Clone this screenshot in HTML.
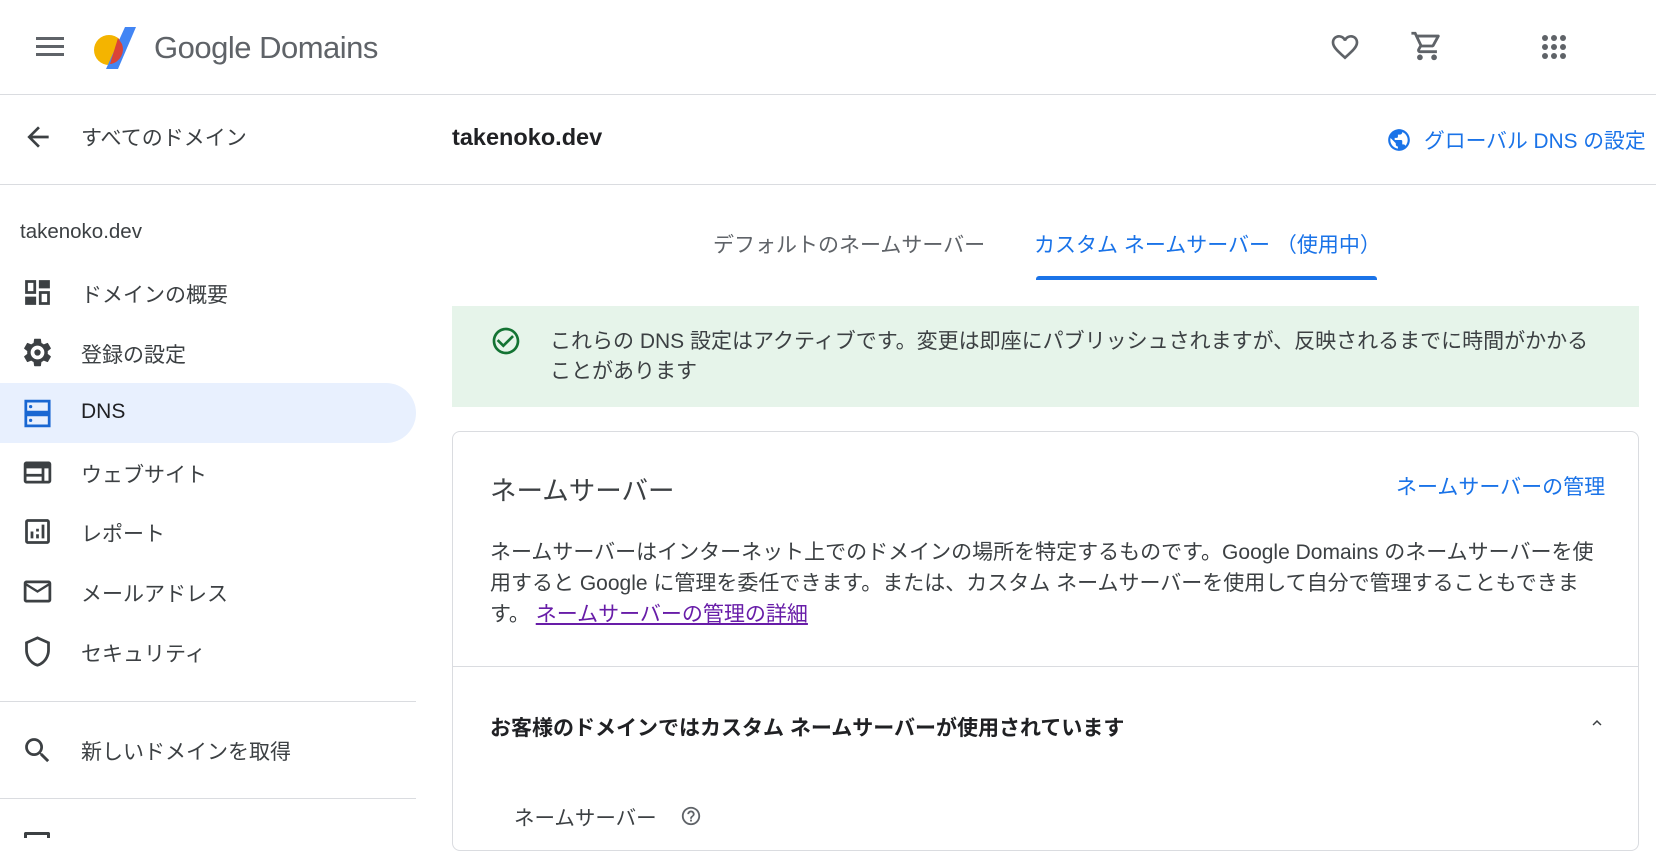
<!DOCTYPE html>
<html><head><meta charset="utf-8"><style>
*{margin:0;padding:0;box-sizing:border-box}
body{width:1656px;height:836px;overflow:hidden;background:#fff;font-family:"Liberation Sans","Noto Sans CJK JP",sans-serif;color:#3c4043;position:relative}
.a{position:absolute;white-space:nowrap}
.hl{position:absolute;height:1px;background:#dadce0}
.side{font-size:21px;color:#3c4043}
.ic{position:absolute;left:21px}
</style></head><body>
<svg class="a" style="left:36px;top:36px" width="28" height="20"><g fill="#5f6368"><rect x="0" y="1" width="28" height="3"/><rect x="0" y="9" width="28" height="3"/><rect x="0" y="17" width="28" height="3"/></g></svg>
<svg class="a" style="left:92px;top:26px" width="48" height="46" viewBox="0 0 48 46"><circle cx="17" cy="24" r="15" fill="#f4b400"/><path d="M33 1h11L26 43H14z" fill="#4285f4"/><path d="M26 12 L30 18 A15 15 0 0 1 19 38 L18 38 Z" fill="#db4437"/></svg>
<div class="a" style="left:154px;top:30px;font-size:31px;color:#5f6368;letter-spacing:-0.5px">Google Domains</div>
<svg class="a" style="left:1328px;top:31px" width="34" height="32" viewBox="0 0 24 24"><path d="M16.5 3c-1.740 0-3.41.81-4.5 2.09C10.91 3.81 9.24 3 7.5 3 4.420 3 2 5.42 2 8.5c0 3.780 3.4 6.860 8.550 11.540L12 21.350l1.450-1.320C18.6 15.360 22 12.280 22 8.5 22 5.420 19.580 3 16.5 3zm-4.4 15.550l-.1.1-.1-.1C7.140 14.240 4 11.390 4 8.5 4 6.5 5.5 5 7.5 5c1.540 0 3.040.99 3.570 2.360h1.870C13.460 5.990 14.960 5 16.5 5c2 0 3.5 1.5 3.5 3.5 0 2.890-3.140 5.740-7.900 10.050z" fill="#5f6368"/></svg>
<svg class="a" style="left:1410px;top:29px" width="34" height="34" viewBox="0 0 24 24"><path d="M15.55 13c.75 0 1.41-.41 1.75-1.03l3.58-6.49A.996.996 0 0020.01 4H5.21l-.94-2H1v2h2l3.6 7.59-1.35 2.44C4.52 15.37 5.48 17 7 17h12v-2H7l1.1-2h7.45zM6.16 6h12.15l-2.76 5H8.53L6.16 6zM7 18c-1.1 0-1.99.9-1.990 2S5.9 22 7 22s2-.9 2-2-.9-2-2-2zm10 0c-1.1 0-1.99.9-1.99 2s.89 2 1.99 2 2-.9 2-2-.9-2-2-2z" fill="#5f6368"/></svg>
<svg class="a" style="left:1541px;top:34px" width="26" height="26"><g fill="#5f6368"><circle cx="4" cy="4" r="3"/><circle cx="13" cy="4" r="3"/><circle cx="22" cy="4" r="3"/><circle cx="4" cy="13" r="3"/><circle cx="13" cy="13" r="3"/><circle cx="22" cy="13" r="3"/><circle cx="4" cy="22" r="3"/><circle cx="13" cy="22" r="3"/><circle cx="22" cy="22" r="3"/></g></svg>
<div class="hl" style="left:0;top:94px;width:1656px"></div>
<svg class="a" style="left:22px;top:121px" width="32" height="32" viewBox="0 0 24 24"><path d="M20 11H7.83l5.59-5.59L12 4l-8 8 8 8 1.41-1.41L7.83 13H20v-2z" fill="#3c4043"/></svg>
<div class="a side" style="left:81px;top:122px">すべてのドメイン</div>
<div class="a" style="left:452px;top:124px;font-size:23.5px;font-weight:bold;color:#202124">takenoko.dev</div>
<svg class="a" style="left:1386px;top:127px" width="26" height="26" viewBox="0 0 24 24"><path d="M12 2C6.48 2 2 6.48 2 12s4.48 10 10 10 10-4.48 10-10S17.52 2 12 2zm-1 17.93c-3.95-.49-7-3.85-7-7.93 0-.62.08-1.21.21-1.79L9 15v1c0 1.1.9 2 2 2v1.93zm6.9-2.54c-.26-.81-1-1.39-1.9-1.39h-1v-3c0-.55-.45-1-1-1H8v-2h2c.55 0 1-.45 1-1V7h2c1.1 0 2-.9 2-2v-.41c2.93 1.19 5 4.06 5 7.41 0 2.08-.8 3.97-2.1 5.39z" fill="#1a73e8"/></svg>
<div class="a" style="left:1424px;top:124px;font-size:20.8px;color:#1a73e8">グローバル DNS の設定</div>
<div class="hl" style="left:0;top:184px;width:1656px"></div>
<div class="a" style="left:20px;top:220px;font-size:20.5px;color:#3c4043">takenoko.dev</div>
<svg class="ic a" style="top:276px" width="33" height="33" viewBox="0 0 24 24"><path d="M3 13h8V3H3v10zm0 8h8v-6H3v6zm10 0h8V11h-8v10zm0-18v6h8V3h-8z" fill="#3c4043"/><rect x="5" y="5" width="4" height="6" fill="#fff"/><rect x="15" y="13" width="4" height="6" fill="#fff"/></svg>
<div class="a side" style="left:81px;top:279px">ドメインの概要</div>
<svg class="ic a" style="top:336px" width="33" height="33" viewBox="0 0 24 24"><path d="M19.43 12.98c.04-.32.07-.64.07-.98s-.03-.66-.07-.98l2.11-1.65c.19-.15.24-.42.12-.64l-2-3.46a.5.5 0 00-.61-.22l-2.49 1c-.52-.4-1.08-.73-1.69-.98l-.38-2.65A.488.488 0 0014 2h-4c-.25 0-.46.18-.49.42l-.38 2.650c-.61.25-1.17.59-1.69.98l-2.49-1a.5.5 0 00-.61.22l-2 3.46c-.13.22-.07.49.12.64l2.11 1.65c-.04.32-.07.65-.07.98s.03.66.07.98l-2.11 1.65c-.19.15-.24.42-.12.64l2 3.46c.12.22.39.3.61.22l2.49-1c.52.4 1.08.73 1.69.98l.38 2.65c.03.24.24.42.49.42h4c.25 0 .46-.18.49-.42l.38-2.65c.61-.25 1.17-.59 1.69-.98l2.49 1c.23.09.49 0 .61-.22l2-3.46c.12-.22.07-.49-.12-.64l-2.11-1.65zM12 17a5 5 0 110-10 5 5 0 010 10z" fill="#3c4043"/><circle cx="12" cy="12" r="2.3" fill="#3c4043"/></svg>
<div class="a side" style="left:81px;top:339px">登録の設定</div>
<div class="a" style="left:0;top:383px;width:416px;height:60px;background:#e8f0fe;border-radius:0 30px 30px 0"></div>
<svg class="ic a" style="top:397px" width="33" height="33" viewBox="0 0 24 24"><g fill="none" stroke="#1967d2" stroke-width="2"><rect x="3.5" y="3" width="17" height="8"/><rect x="3.5" y="13" width="17" height="8"/></g><circle cx="7" cy="7" r="1.2" fill="#1967d2"/><circle cx="7" cy="17" r="1.2" fill="#1967d2"/></svg>
<div class="a" style="left:81px;top:400px;font-size:21px;color:#202124">DNS</div>
<svg class="ic a" style="top:456px" width="33" height="33" viewBox="0 0 24 24"><path d="M20 4H4c-1.1 0-2 .9-2 2v12c0 1.1.9 2 2 2h16c1.1 0 2-.9 2-2V6c0-1.1-.9-2-2-2zM4 9h11v4H4V9zm0 9v-3h11v3H4zm16 0h-3V9h3v9z" fill="#3c4043"/></svg>
<div class="a side" style="left:81px;top:459px">ウェブサイト</div>
<svg class="ic a" style="top:515px" width="33" height="33" viewBox="0 0 24 24"><path d="M19 3H5c-1.1 0-2 .9-2 2v14c0 1.1.9 2 2 2h14c1.1 0 2-.9 2-2V5c0-1.1-.9-2-2-2zm0 16H5V5h14v14zM7 12h2v5H7zm8-5h2v10h-2zm-4 7h2v3h-2zm0-4h2v2h-2z" fill="#3c4043"/></svg>
<div class="a side" style="left:81px;top:518px">レポート</div>
<svg class="ic a" style="top:575px" width="33" height="33" viewBox="0 0 24 24"><path d="M22 6c0-1.1-.9-2-2-2H4c-1.1 0-2 .9-2 2v12c0 1.1.9 2 2 2h16c1.1 0 2-.9 2-2V6zm-2 0l-8 5-8-5h16zm0 12H4V8l8 5 8-5v10z" fill="#3c4043"/></svg>
<div class="a side" style="left:81px;top:578px">メールアドレス</div>
<svg class="ic a" style="top:634px" width="33" height="35" viewBox="0 0 24 24"><path d="M12 1L3 5v6c0 5.55 3.84 10.74 9 12 5.16-1.26 9-6.450 9-12V5l-9-4zm7 10c0 4.52-2.98 8.69-7 9.93-4.02-1.24-7-5.41-7-9.93V6.3l7-3.11 7 3.11V11z" fill="#3c4043"/></svg>
<div class="a side" style="left:81px;top:638px">セキュリティ</div>
<div class="hl" style="left:0;top:701px;width:416px"></div>
<svg class="ic a" style="top:734px" width="33" height="33" viewBox="0 0 24 24"><path d="M15.5 14h-.79l-.28-.27A6.471 6.471 0 0016 9.5 6.5 6.5 0 109.5 16c1.61 0 3.09-.59 4.23-1.57l.27.28v.79l5 4.99L20.49 19l-4.99-5zm-6 0C7.01 14 5 11.99 5 9.5S7.01 5 9.5 5 14 7.01 14 9.5 11.99 14 9.5 14z" fill="#3c4043"/></svg>
<div class="a side" style="left:81px;top:736px">新しいドメインを取得</div>
<div class="hl" style="left:0;top:798px;width:416px"></div>
<div class="a" style="left:24px;top:832px;width:26px;height:6px;border:3px solid #3c4043;border-bottom:none;border-radius:2px 2px 0 0"></div>
<div class="a" style="left:713px;top:229px;font-size:21px;color:#5f6368">デフォルトのネームサーバー</div>
<div class="a" style="left:1034px;top:229px;font-size:21px;color:#1a73e8">カスタム ネームサーバー （使用中）</div>
<div class="a" style="left:1036px;top:276px;width:341px;height:4px;background:#1a73e8;border-radius:3px 3px 0 0"></div>
<div class="a" style="left:452px;top:306px;width:1187px;height:101px;background:#e6f4ea"></div>
<svg class="a" style="left:490px;top:325px" width="32" height="32" viewBox="0 0 24 24"><path d="M16.59 7.58L10 14.17l-3.59-3.58L5 12l5 5 8-8zM12 2C6.48 2 2 6.48 2 12s4.48 10 10 10 10-4.48 10-10S17.52 2 12 2zm0 18c-4.42 0-8-3.58-8-8s3.58-8 8-8 8 3.58 8 8-3.58 8-8 8z" fill="#137333"/></svg>
<div class="a" style="left:550px;top:327px;font-size:21px;color:#3c4043;line-height:30px;white-space:normal;width:1045px">これらの DNS 設定はアクティブです。変更は即座にパブリッシュされますが、反映されるまでに時間がかかることがあります</div>
<div class="a" style="left:452px;top:431px;width:1187px;height:420px;border:1px solid #dadce0;border-radius:8px"></div>
<div class="a" style="left:490px;top:469px;font-size:26.5px;color:#3c4043">ネームサーバー</div>
<div class="a" style="left:1396px;top:471px;font-size:21px;color:#1a73e8">ネームサーバーの管理</div>
<div class="a" style="left:490px;top:537px;width:1115px;font-size:21px;line-height:31px;color:#3c4043;white-space:normal">ネームサーバーはインターネット上でのドメインの場所を特定するものです。Google Domains のネームサーバーを使用すると Google に管理を委任できます。または、カスタム ネームサーバーを使用して自分で管理することもできます。 <span style="color:#681da8;text-decoration:underline">ネームサーバーの管理の詳細</span></div>
<div class="hl" style="left:453px;top:666px;width:1185px"></div>
<div class="a" style="left:490px;top:712px;font-size:21px;font-weight:bold;color:#202124">お客様のドメインではカスタム ネームサーバーが使用されています</div>
<svg class="a" style="left:1586px;top:714px" width="22" height="18" viewBox="0 0 24 24"><path d="M7.41 15.41L12 10.83l4.59 4.58L18 14l-6-6-6 6z" fill="#3c4043"/></svg>
<div class="a" style="left:514px;top:801px;font-size:20.5px;color:#3c4043">ネームサーバー</div>
<svg class="a" style="left:680px;top:805px" width="22" height="22" viewBox="0 0 24 24"><path d="M11 18h2v-2h-2v2zm1-16C6.48 2 2 6.48 2 12s4.48 10 10 10 10-4.48 10-10S17.52 2 12 2zm0 18c-4.41 0-8-3.59-8-8s3.59-8 8-8 8 3.59 8 8-3.59 8-8 8zm0-14c-2.21 0-4 1.79-4 4h2c0-1.1.9-2 2-2s2 .9 2 2c0 2-3 1.75-3 5h2c0-2.25 3-2.5 3-5 0-2.21-1.79-4-4-4z" fill="#5f6368"/></svg>
</body></html>
